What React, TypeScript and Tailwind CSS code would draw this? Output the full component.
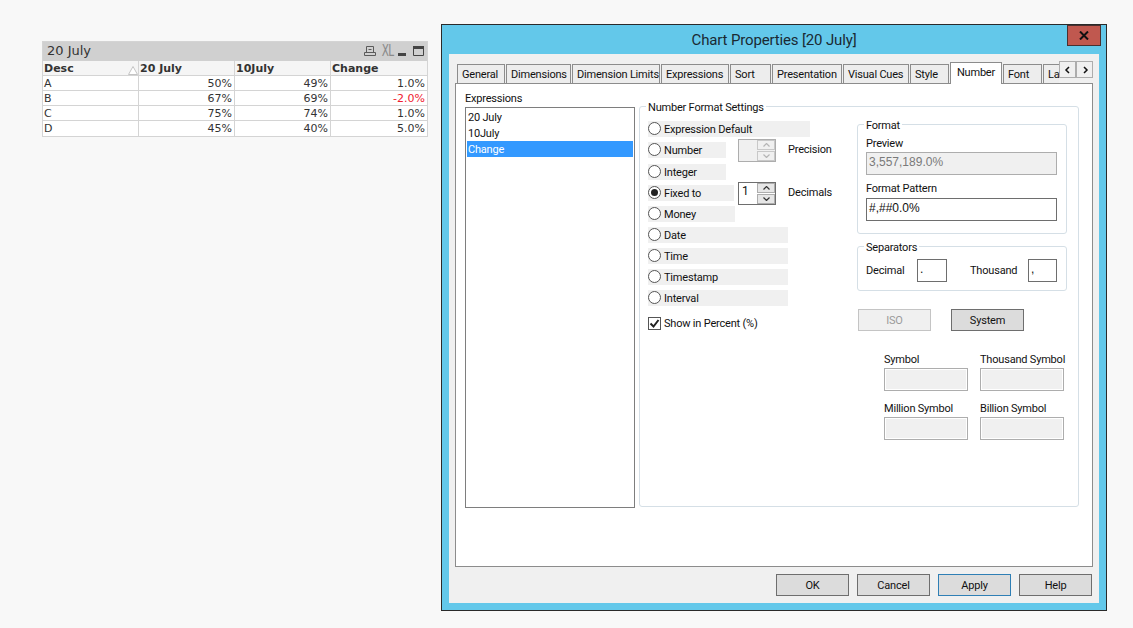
import type { ReactNode } from "react";

const tabs = [
  { label: "General", w: "w-[48px]" },
  { label: "Dimensions", w: "w-[65px]" },
  { label: "Dimension Limits", w: "w-[88px]" },
  { label: "Expressions", w: "w-[68px]" },
  { label: "Sort", w: "w-[41px]" },
  { label: "Presentation", w: "w-[70px]" },
  { label: "Visual Cues", w: "w-[66px]" },
  { label: "Style", w: "w-[39px]" },
];

const rows = [
  ["A", "50%", "49%", "1.0%"],
  ["B", "67%", "69%", "-2.0%"],
  ["C", "75%", "74%", "1.0%"],
  ["D", "45%", "40%", "5.0%"],
];

function TableBox() {
  return (
    <div className="ml-[42px] mt-[41px] w-[386px] shrink-0 border border-[#d4d4d4] font-['DejaVu_Sans',sans-serif] text-[11px] tracking-normal text-[#333]">
      <div className="flex h-[19px] items-center justify-between bg-[#d0d0d0] pb-[1px] pl-[4px] pr-[3px] text-[13px] text-[#333]">
        <span>20 July</span>
        <div className="flex items-center gap-[4px]">
          <svg width="12" height="12" viewBox="0 0 12 12" fill="none" stroke="#5a5a5a">
            <path d="M2.5 1.5h7v6h-7zM4.5 4.5h3M.5 10.5h11v-3h-11z" />
          </svg>
          <span className="w-[11px] text-[15px] leading-none tracking-[-1px] text-[#8a8a8a] [transform:scaleX(0.7)]">XL</span>
          <svg width="26" height="12" viewBox="0 0 26 12" fill="none" className="ml-[3px]">
            <rect x="0" y="8" width="8" height="3" fill="#444" />
            <path d="M15.5 1.5h10v9h-10z" stroke="#444" />
            <rect x="15" y="1" width="11" height="3" fill="#444" />
          </svg>
        </div>
      </div>
      <div className="grid grid-cols-[96px_96px_96px_96px] bg-[#f5f5f5] font-bold">
        <div className="relative h-[15px] border-r border-b border-[#d4d4d4] pl-[1px] leading-[15px]">
          Desc
          <svg width="10" height="9" viewBox="0 0 10 9" className="absolute right-[0px] top-[5px]" fill="#fff" stroke="#c4c4c4">
            <path d="M5 .5L9.5 8.5h-9z" />
          </svg>
        </div>
        <div className="h-[15px] border-r border-b border-[#d4d4d4] pl-[1px] leading-[15px]">20 July</div>
        <div className="h-[15px] border-r border-b border-[#d4d4d4] pl-[1px] leading-[15px]">10July</div>
        <div className="h-[15px] border-b border-[#d4d4d4] pl-[1px] leading-[15px]">Change</div>
      </div>
      {rows.map((r, i) => (
        <div key={r[0]} className="grid grid-cols-[96px_96px_96px_96px] bg-white">
          <div className={`h-[15px] border-r border-[#d4d4d4] pl-[1px] leading-[15px] ${i < 3 ? "border-b" : ""}`}>{r[0]}</div>
          <div className={`h-[15px] border-r border-[#d4d4d4] pr-[2px] text-right leading-[15px] ${i < 3 ? "border-b" : ""}`}>{r[1]}</div>
          <div className={`h-[15px] border-r border-[#d4d4d4] pr-[2px] text-right leading-[15px] ${i < 3 ? "border-b" : ""}`}>{r[2]}</div>
          <div className={`h-[15px] border-[#d4d4d4] pr-[2px] text-right leading-[15px] ${i < 3 ? "border-b" : ""} ${r[3].startsWith("-") ? "text-[#f02030]" : ""}`}>{r[3]}</div>
        </div>
      ))}
    </div>
  );
}

function Radio({ label, w, on }: { label: string; w: string; on?: boolean }) {
  return (
    <div className={`flex h-[16px] items-start bg-[#f0f0f0] pt-[1px] leading-[16px] ${w}`}>
      <span className="flex h-[13px] w-[13px] shrink-0 items-center justify-center rounded-full border border-[#555] bg-white">
        {on && <span className="h-[7px] w-[7px] rounded-full bg-[#222]" />}
      </span>
      <span className="ml-[3px] whitespace-nowrap">{label}</span>
    </div>
  );
}

function Spinner({ value, disabled }: { value?: string; disabled?: boolean }) {
  const arrow = disabled ? "#b5b5b5" : "#333";
  return (
    <div className={`ml-[12px] flex h-[23px] w-[38px] shrink-0 border ${disabled ? "border-[#adadad] bg-[#f0f0f0]" : "border-[#6e6e6e] bg-white"}`}>
      <span className="flex-1 pl-[3px] text-[12px] leading-[17px]">{value}</span>
      <div className="flex w-[18px] flex-col gap-[1px]">
        {[0, 1].map((i) => (
          <div key={i} className={`flex flex-1 items-center justify-center border ${disabled ? "border-[#c8c8c8] bg-[#f0f0f0]" : "border-[#adadad] bg-[#e6e6e6]"}`}>
            <svg width="7" height="4" viewBox="0 0 7 4" fill="none" stroke={arrow} strokeWidth="1.2">
              <path d={i === 0 ? "M.5 3.5l3-3 3 3" : "M.5 .5l3 3 3-3"} />
            </svg>
          </div>
        ))}
      </div>
    </div>
  );
}

function Group({ title, className, children }: { title: string; className: string; children: ReactNode }) {
  return (
    <div className={`relative rounded-[3px] border border-[#d5dfe6] ${className}`}>
      <span className="absolute left-[6px] top-[-6px] bg-white px-[2px] leading-[14px]">{title}</span>
      {children}
    </div>
  );
}

function Field({ children, tone, className }: { children?: ReactNode; tone: "on" | "off"; className: string }) {
  return (
    <div
      className={`h-[23px] border pl-[2px] font-['Liberation_Sans',sans-serif] text-[12px] leading-[19px] tracking-normal ${
        tone === "on" ? "border-[#6e6e6e] bg-white" : "border-[#adadad] bg-[#f0f0f0] text-[#7a7a7a]"
      } ${className}`}
    >
      {children}
    </div>
  );
}

function Btn({ label, className }: { label: string; className?: string }) {
  return (
    <div className={`flex h-[22px] w-[73px] items-center justify-center border bg-[#dcdcdc] pt-[2px] ${className ?? "border-[#6e6e6e]"}`}>
      {label}
    </div>
  );
}

function SymbolField({ label }: { label: string }) {
  return (
    <div className="w-[84px]">
      <div className="h-[16px] whitespace-nowrap leading-[18px]">{label}</div>
      <div className="mt-[1px] h-[23px] border border-[#adadad] bg-[#f0f0f0] shadow-[inset_0_0_0_1px_#fff]" />
    </div>
  );
}

function NumberTab() {
  return (
    <div className="flex h-[484px] w-[638px] border border-[#8c8c8c] bg-white pl-[9px]">
      <div className="w-[170px] pt-[7px]">
        <div className="h-[16px] leading-[16px]">Expressions</div>
        <div className="h-[401px] border border-[#7e7e7e] p-[1px] leading-[18px]">
          <div className="h-[16px] pl-[1px]">20 July</div>
          <div className="h-[16px] pl-[1px]">10July</div>
          <div className="h-[16px] bg-[#3399ff] pl-[1px] text-white">Change</div>
        </div>
      </div>
      <div className="ml-[4px] pt-[22px]">
        <Group title="Number Format Settings" className="flex h-[401px] w-[440px]">
          <div className="ml-[8px] w-[209px] pt-[14px]">
            <div className="flex flex-col gap-[5px]">
              <Radio label="Expression Default" w="w-[162px]" />
              <div className="flex h-[16px] items-center">
                <Radio label="Number" w="w-[78px]" />
                <Spinner disabled />
                <span className="ml-[12px]">Precision</span>
              </div>
              <Radio label="Integer" w="w-[78px] mt-[1px]" />
              <div className="flex h-[16px] items-center">
                <Radio label="Fixed to" w="w-[86px] mr-[-8px]" on />
                <Spinner value="1" />
                <span className="ml-[12px]">Decimals</span>
              </div>
              <Radio label="Money" w="w-[87px]" />
              <Radio label="Date" w="w-[140px]" />
              <Radio label="Time" w="w-[140px]" />
              <Radio label="Timestamp" w="w-[140px]" />
              <Radio label="Interval" w="w-[140px]" />
            </div>
            <div className="mt-[9px] flex h-[16px] items-center">
              <span className="flex h-[13px] w-[13px] items-center justify-center border border-[#555] bg-white">
                <svg width="11" height="11" viewBox="0 0 11 11" fill="none" stroke="#222" strokeWidth="2">
                  <path d="M1.5 5.5l3 3 5-6.5" />
                </svg>
              </span>
              <span className="ml-[3px] mt-[2px] whitespace-nowrap">Show in Percent (%)</span>
            </div>
          </div>
          <div className="w-[210px] pt-[17px]">
            <Group title="Format" className="h-[110px] w-[210px] pl-[8px] pt-[10px]">
              <div className="h-[16px] leading-[18px]">Preview</div>
              <Field tone="off" className="mt-[1px] w-[191px]">3,557,189.0%</Field>
              <div className="mt-[5px] h-[16px] leading-[18px]">Format Pattern</div>
              <Field tone="on" className="mt-[2px] w-[191px]">#,##0.0%</Field>
            </Group>
            <Group title="Separators" className="mt-[12px] h-[45px] w-[210px] pl-[8px] pt-[12px]">
              <div className="flex items-center">
                <span className="mt-[2px] w-[51px]">Decimal</span>
                <Field tone="on" className="w-[30px]">.</Field>
                <span className="ml-[23px] mt-[2px] w-[58px]">Thousand</span>
                <Field tone="on" className="w-[29px]">,</Field>
              </div>
            </Group>
            <div className="ml-[1px] mt-[18px] flex gap-[20px]">
              <div className="flex h-[22px] w-[73px] items-center justify-center border border-[#c4c4c4] bg-[#f0f0f0] pt-[2px] text-[#9a9a9a]">ISO</div>
              <Btn label="System" />
            </div>
            <div className="ml-[27px] mt-[20px] grid grid-cols-[84px_84px] gap-x-[12px] gap-y-[9px]">
              <SymbolField label="Symbol" />
              <SymbolField label="Thousand Symbol" />
              <SymbolField label="Million Symbol" />
              <SymbolField label="Billion Symbol" />
            </div>
          </div>
        </Group>
      </div>
    </div>
  );
}

export default function App() {
  return (
    <div className="flex h-[628px] w-[1133px] items-start overflow-hidden bg-[#f8f8f8] font-['Roboto',sans-serif] text-[11px] tracking-[-0.2px] text-[#111]">
      <TableBox />
      <div className="relative ml-[13px] mt-[24px] flex h-[587px] w-[666px] shrink-0 flex-col border border-[#2a2a2a] bg-[#63c8ea]">
        <div className="h-[29px] text-center text-[15px] leading-[31px] tracking-[-0.15px] text-[#1a2a33]">Chart Properties [20 July]</div>
        <div className="absolute right-[5px] top-0 flex h-[21px] w-[34px] items-center justify-center border border-[#4a3030] bg-[#c0584f]">
          <svg width="10" height="9" viewBox="0 0 10 9" stroke="#111" strokeWidth="2">
            <path d="M1 .5l8 8M9 .5l-8 8" />
          </svg>
        </div>
        <div className="mx-[7px] mb-[7px] flex-1 bg-[#f0f0f0] pl-[6px] pt-[8px]">
          <div className="relative z-10 flex h-[21px] items-end pl-[2px]">
            {tabs.map((t) => (
              <div key={t.label} className={`mr-[1px] h-[19px] shrink-0 whitespace-nowrap border-x border-t border-[#8c8c8c] bg-[#ededed] pl-[4px] leading-[19px] ${t.w}`}>
                {t.label}
              </div>
            ))}
            <div className="mr-[1px] -mb-[1px] h-[22px] w-[52px] shrink-0 border-x border-t border-[#8c8c8c] bg-white text-center leading-[19px]">Number</div>
            <div className="mr-[1px] h-[19px] w-[39px] shrink-0 border-x border-t border-[#8c8c8c] bg-[#ededed] pl-[4px] leading-[19px]">Font</div>
            <div className="h-[19px] w-[16px] shrink-0 overflow-hidden whitespace-nowrap border-l border-t border-[#8c8c8c] bg-[#ededed] pl-[4px] leading-[19px]">La</div>
            <div className="absolute left-[604px] top-[-1px] flex">
              {["M5 1L2 4l3 3", "M3 1l3 3-3 3"].map((d) => (
                <div key={d} className="flex h-[17px] w-[17px] items-center justify-center border border-[#adadad] bg-[#f0f0f0]">
                  <svg width="8" height="8" viewBox="0 0 8 8" fill="none" stroke="#111" strokeWidth="1.5">
                    <path d={d} />
                  </svg>
                </div>
              ))}
            </div>
          </div>
          <NumberTab />
          <div className="ml-[321px] mt-[7px] flex gap-[8px]">
            <Btn label="OK" />
            <Btn label="Cancel" />
            <Btn label="Apply" className="border-[#2f7fb5]" />
            <Btn label="Help" />
          </div>
        </div>
      </div>
    </div>
  );
}
